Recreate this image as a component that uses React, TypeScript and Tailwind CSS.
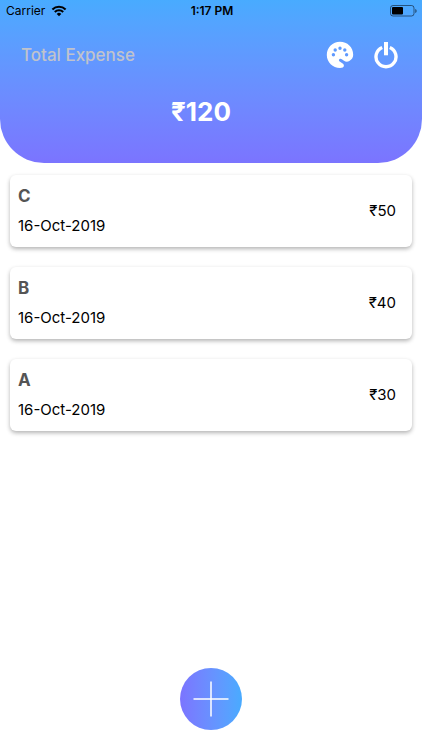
interface Expense {
  id: number
  title: string
  date: string
  amount: number
}

const expenses: Expense[] = [
  { id: 3, title: 'C', date: '16-Oct-2019', amount: 50 },
  { id: 2, title: 'B', date: '16-Oct-2019', amount: 40 },
  { id: 1, title: 'A', date: '16-Oct-2019', amount: 30 }
]

function WifiIcon() {
  return (
    <svg className="h-3 w-4" viewBox="0 0 16 12" fill="none" stroke="#000" strokeWidth="2.1">
      <path d="M1.4 4.4a9.4 9.4 0 0 1 13.2 0" />
      <path d="M3.8 7a6 6 0 0 1 8.4 0" />
      <path d="M8 11.2 5.7 8.9a3.3 3.3 0 0 1 4.6 0z" fill="#000" stroke="none" />
    </svg>
  )
}

function BatteryIcon() {
  return (
    <svg className="h-3 w-7" viewBox="0 0 28 12">
      <rect x="0.5" y="0.5" width="23.5" height="10.5" rx="2.5" fill="none" stroke="#000" strokeOpacity="0.5" />
      <rect x="2" y="2" width="11" height="7.5" rx="1" fill="#000" />
      <path d="M25.2 4v4c.9-.3 1.5-1.1 1.5-2s-.6-1.7-1.5-2z" fill="#000" fillOpacity="0.5" />
    </svg>
  )
}

function PaletteIcon() {
  return (
    <svg className="h-7 w-7" viewBox="0 0 28 28">
      <path
        fill="#fff"
        fillRule="evenodd"
        d="M14 .8C6.7.8.8 6.7.8 14c0 7.2 6 13 13.2 13 2.2 0 3.9-.6 3.9-2.400 0-1.200-.9-1.900-2-2.600l-2.200-1.500c-1-.7-1-2-.1-2.500.8-.5 1.700-.2 2.600.5l1.800 1.300c1.500 1 3.500 1.200 5.300.2 2.400-1.300 3.900-3.400 3.900-6.200C27.200 6.200 21.300.8 14 .8z
           M7.400 12a1.700 1.700 0 1 1 0 3.400 1.700 1.700 0 0 1 0-3.400z
           M9.200 7.300a1.700 1.700 0 1 1 0 3.400 1.700 1.700 0 0 1 0-3.400z
           M14 5.500a1.700 1.700 0 1 1 0 3.400 1.700 1.700 0 0 1 0-3.400z
           M18.800 7.300a1.700 1.700 0 1 1 0 3.400 1.700 1.700 0 0 1 0-3.400z
           M20.600 12a1.700 1.700 0 1 1 0 3.400 1.700 1.700 0 0 1 0-3.400z"
      />
    </svg>
  )
}

function PowerIcon() {
  return (
    <svg className="h-7 w-6" viewBox="0 0 24 28" fill="none" stroke="#fff">
      <path d="M8.2 6.5a10 10 0 1 0 7.6 0" strokeWidth="3.4" />
      <path d="M12 1v13.3" strokeWidth="4" />
    </svg>
  )
}

function StatusBar() {
  return (
    <div className="grid h-5 grid-cols-3 items-center pt-0.5 pr-1 pl-1.5 text-xs text-black">
      <div className="flex items-center gap-1.5">
        <span>Carrier</span>
        <WifiIcon />
      </div>
      <span className="text-center font-semibold">1:17 PM</span>
      <div className="flex justify-end">
        <BatteryIcon />
      </div>
    </div>
  )
}

function ExpenseCard({ expense }: { expense: Expense }) {
  return (
    <li className="flex items-center justify-between rounded-md bg-white py-2 pr-4 pl-2 shadow-[0_2px_4px_rgba(0,0,0,0.3)]">
      <div className="flex flex-col gap-1">
        <h2 className="text-[17px] leading-[26px] font-bold text-[#555]">{expense.title}</h2>
        <p className="text-[15px] leading-[26px]">{expense.date}</p>
      </div>
      <span className="text-[15px]">₹{expense.amount}</span>
    </li>
  )
}

export default function App() {
  const total = expenses.reduce((sum, expense) => sum + expense.amount, 0)

  return (
    <div className="flex min-h-screen flex-col bg-white font-['Inter',sans-serif] text-black">
      <header className="rounded-b-[44px] bg-linear-to-b from-[#48abff] to-[#7b74ff] pb-8">
        <StatusBar />
        <div className="flex items-center justify-between pt-[21px] pr-6 pl-[21px]">
          <h1 className="text-[17px] leading-7 font-medium text-[#c0c3cc]">Total Expense</h1>
          <div className="flex items-center gap-5">
            <button type="button" aria-label="Change theme">
              <PaletteIcon />
            </button>
            <button type="button" aria-label="Log out">
              <PowerIcon />
            </button>
          </div>
        </div>
        <p className="pt-6 pr-5 text-center text-[26px] leading-[38px] font-bold text-white">₹{total}</p>
      </header>

      <main className="flex-1 px-[10px] pt-3">
        <ul className="flex flex-col gap-5">
          {expenses.map((expense) => (
            <ExpenseCard key={expense.id} expense={expense} />
          ))}
        </ul>
      </main>

      <footer className="sticky bottom-0 flex justify-center pb-5">
        <button
          type="button"
          aria-label="Add expense"
          className="flex size-[62px] items-center justify-center rounded-full bg-linear-to-r from-[#7b74ff] to-[#48abff]"
        >
          <svg className="size-9" viewBox="0 0 36 36" stroke="#fff" strokeWidth="1.5">
            <path d="M18 0.5v35M0.5 18h35" />
          </svg>
        </button>
      </footer>
    </div>
  )
}
